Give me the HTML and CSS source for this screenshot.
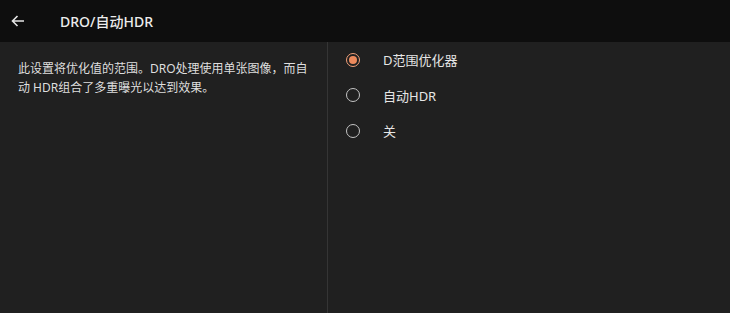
FILE: index.html
```html
<!DOCTYPE html>
<html lang="zh-CN">
<head>
    <meta charset="UTF-8">
    <meta name="viewport" content="width=device-width, initial-scale=1.0">
    <title>DRO/自动HDR</title>
    <link rel="stylesheet" href="styles.css">
</head>
<body>
    <header class="top-bar">
        <button class="back-btn" aria-label="返回">
            <svg width="14" height="12" viewBox="0 0 14 12">
                <path d="M13 6H1.5M6.5 1L1.5 6l5 5" fill="none" stroke="#e6e6e6" stroke-width="1.6"/>
            </svg>
        </button>
        <h1>DRO/自动HDR</h1>
    </header>

    <main class="content">
        <section class="description">
            <p>此设置将优化值的范围。DRO处理使用单张图像，而自动 HDR组合了多重曝光以达到效果。</p>
        </section>
        <section class="options">
            <label class="option">
                <input type="radio" name="dro" checked>
                <span class="radio"></span>
                <span class="option-text">D范围优化器</span>
            </label>
            <label class="option">
                <input type="radio" name="dro">
                <span class="radio"></span>
                <span class="option-text">自动HDR</span>
            </label>
            <label class="option">
                <input type="radio" name="dro">
                <span class="radio"></span>
                <span class="option-text">关</span>
            </label>
        </section>
    </main>
</body>
</html>
```

FILE: styles.css
```css
/* Global */
body {
    font-family: "Noto Sans", "Noto Sans CJK SC", sans-serif;
    margin: 0;
    padding: 0;
    background-color: #202020;
    color: #e6e6e6;
    height: 313px;
    overflow: hidden;
}

/* Top bar */
.top-bar {
    display: flex;
    align-items: center;
    height: 42px;
    background-color: #0e0e0e;
}

.back-btn {
    width: 36px;
    height: 42px;
    padding: 0 0 0 11px;
    border: none;
    background: none;
    display: flex;
    align-items: center;
    cursor: pointer;
}

.top-bar h1 {
    margin: 0 0 0 24px;
    font-size: 14px;
    font-weight: 500;
    color: #ececec;
}

/* Content */
.content {
    display: grid;
    grid-template-columns: 328px 1fr;
    height: 271px;
}

.description {
    border-right: 1px solid #353535;
    padding: 17px 18px 0 18px;
}

.description p {
    margin: 0;
    font-size: 12px;
    line-height: 19px;
    color: #dedede;
}

.option {
    display: flex;
    align-items: center;
    height: 35.5px;
    padding-left: 18px;
    cursor: pointer;
}

.option input {
    display: none;
}

.radio {
    flex: none;
    width: 12px;
    height: 12px;
    border: 1.5px solid #c4c4c4;
    border-radius: 50%;
    position: relative;
    box-sizing: content-box;
}

.option input:checked + .radio {
    border-color: #f1a07a;
}

.option input:checked + .radio::after {
    content: "";
    position: absolute;
    top: 2px;
    left: 2px;
    width: 8px;
    height: 8px;
    border-radius: 50%;
    background-color: #ee8a5c;
}

.option-text {
    margin-left: 23px;
    font-size: 13px;
    color: #e6e6e6;
}
```
